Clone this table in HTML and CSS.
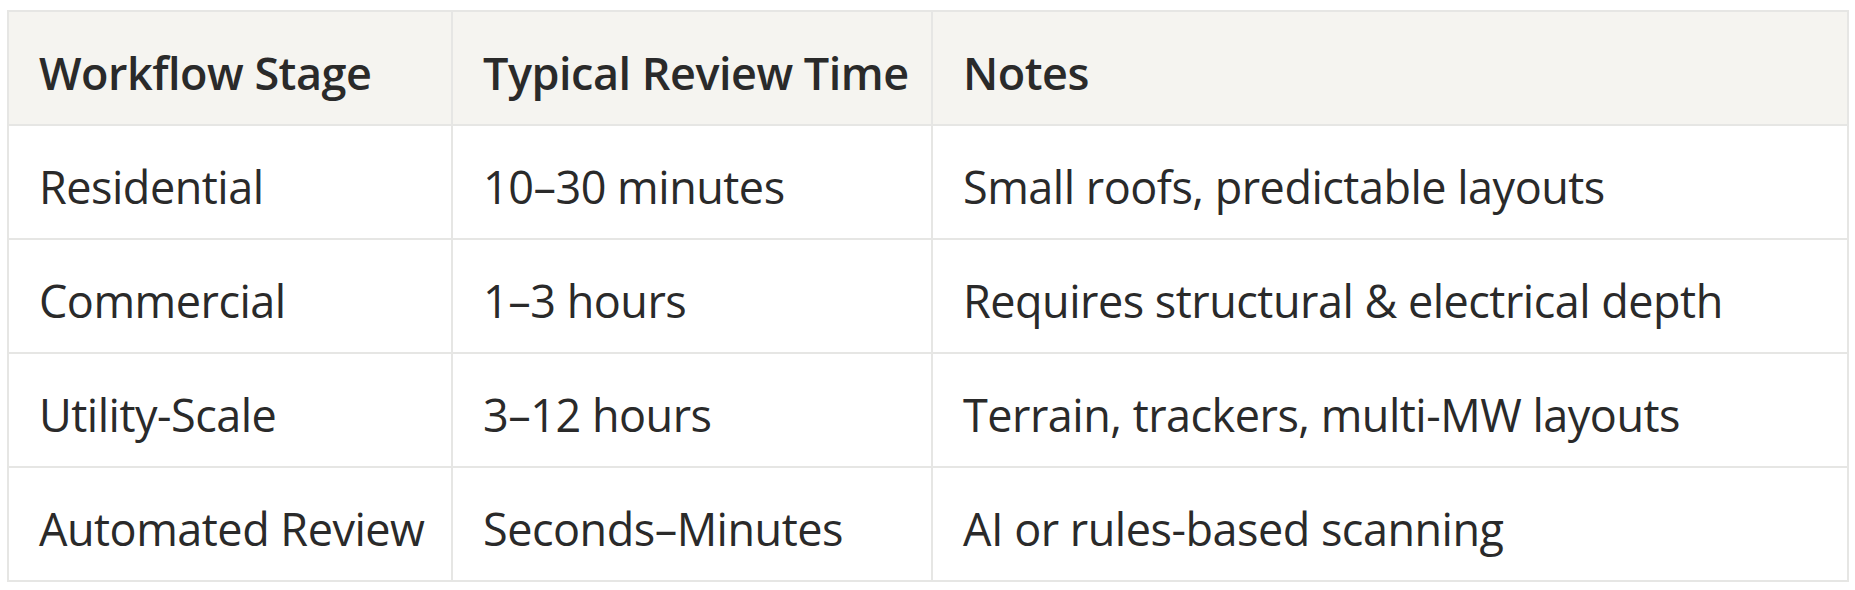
FILE: index.html
```html
<!DOCTYPE html>
<html lang="en">
<head>
<meta charset="utf-8">
<title>Review times</title>
<link rel="stylesheet" href="styles.css">
</head>
<body>
<div class="page">
  <table class="review-table">
    <colgroup>
      <col class="c1">
      <col class="c2">
      <col class="c3">
    </colgroup>
    <thead>
      <tr>
        <th>Workflow Stage</th>
        <th>Typical Review Time</th>
        <th>Notes</th>
      </tr>
    </thead>
    <tbody>
      <tr>
        <td>Residential</td>
        <td>10–30 minutes</td>
        <td>Small roofs, predictable layouts</td>
      </tr>
      <tr>
        <td>Commercial</td>
        <td>1–3 hours</td>
        <td>Requires structural &amp; electrical depth</td>
      </tr>
      <tr>
        <td>Utility-Scale</td>
        <td>3–12 hours</td>
        <td>Terrain, trackers, multi-MW layouts</td>
      </tr>
      <tr>
        <td>Automated Review</td>
        <td>Seconds–Minutes</td>
        <td>AI or rules-based scanning</td>
      </tr>
    </tbody>
  </table>
</div>
</body>
</html>
```

FILE: styles.css
```css
html, body {
  margin: 0;
  padding: 0;
  background: #ffffff;
}

.page {
  padding: 10px 0 0 7px;
}

.review-table {
  border-collapse: collapse;
  width: 1840px;
  table-layout: fixed;
  font-family: "Open Sans", "Noto Sans", sans-serif;
  font-size: 45px;
  letter-spacing: -0.5px;
  color: #2a2a2a;
}

.c1 { width: 444px; }
.c2 { width: 480px; }
.c3 { width: 916px; }

.review-table th,
.review-table td {
  border: 2px solid #e6e6e4;
  text-align: left;
  padding: 8px 0 0 30px;
  height: 104px;
  white-space: nowrap;
  vertical-align: middle;
}

.review-table th {
  background: #f5f4f0;
  font-weight: 600;
  height: 104px;
}

.review-table td {
  font-weight: 400;
}
```
